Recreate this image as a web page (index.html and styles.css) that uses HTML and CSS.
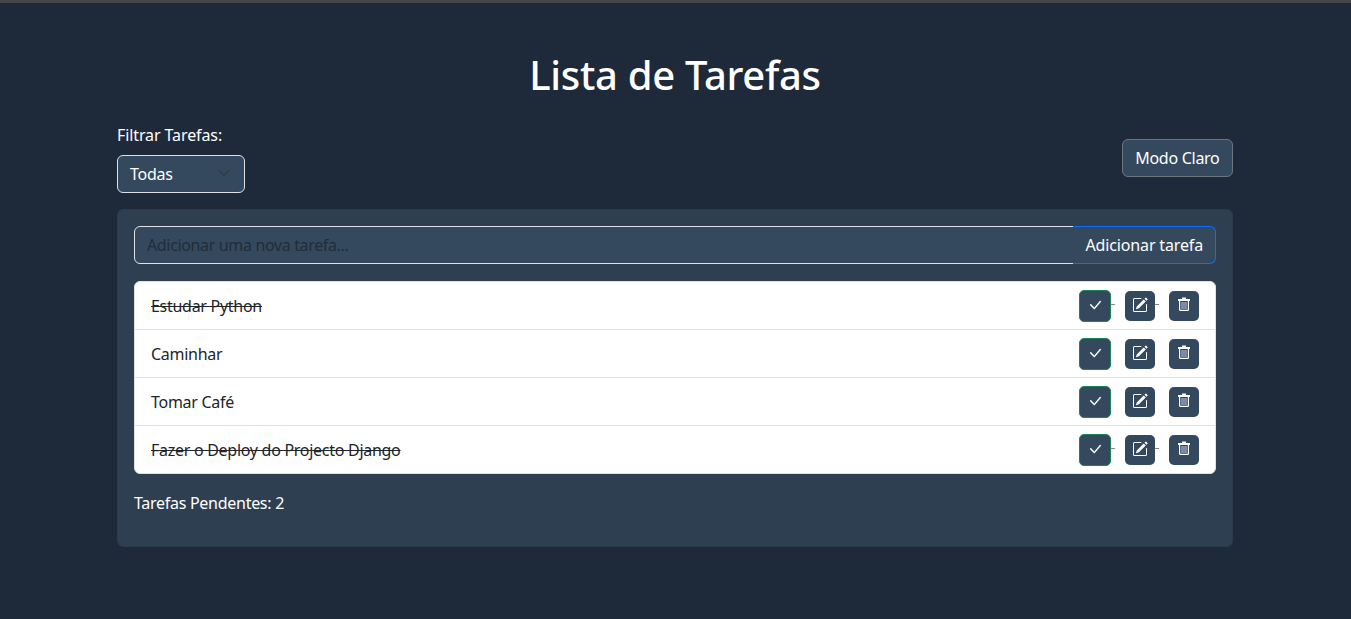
FILE: index.html
```html
<!DOCTYPE html>
<html lang="pt">
<head>
  <meta charset="UTF-8" />
  <meta name="viewport" content="width=device-width, initial-scale=1.0" />
  <title>Lista de Tarefas</title>
  <link rel="stylesheet" href="styles.css">
</head>
<body>
  <div class="top-line"></div>
  <div class="container">
    <h1 class="title">Lista de Tarefas</h1>
    <div class="toolbar">
      <div class="filter">
        <label for="filtro">Filtrar Tarefas:</label>
        <div class="select-box" id="filtro">
          <span>Todas</span>
          <svg class="chevron" viewBox="0 0 16 16"><path fill="none" stroke="#343a40" stroke-linecap="round" stroke-linejoin="round" stroke-width="2" d="m2 5 6 6 6-6"/></svg>
        </div>
      </div>
      <button class="btn-mode">Modo Claro</button>
    </div>
    <div class="card">
      <div class="add-row">
        <input type="text" class="add-input" placeholder="Adicionar uma nova tarefa..." />
        <button class="add-btn">Adicionar tarefa</button>
      </div>
      <ul class="tasks">
        <li class="task done">
          <span class="task-name">Estudar Python</span>
          <div class="actions">
            <a class="act act-check"><svg class="ico" viewBox="0 0 16 16"><use href="#i-check"/></svg></a>
            <a class="act"><svg class="ico" viewBox="0 0 16 16"><use href="#i-edit"/></svg></a>
            <a class="act"><svg class="ico-trash" viewBox="0 0 12 14"><use href="#i-trash"/></svg></a>
          </div>
        </li>
        <li class="task">
          <span class="task-name">Caminhar</span>
          <div class="actions">
            <a class="act act-check"><svg class="ico" viewBox="0 0 16 16"><use href="#i-check"/></svg></a>
            <a class="act"><svg class="ico" viewBox="0 0 16 16"><use href="#i-edit"/></svg></a>
            <a class="act"><svg class="ico-trash" viewBox="0 0 12 14"><use href="#i-trash"/></svg></a>
          </div>
        </li>
        <li class="task">
          <span class="task-name">Tomar Café</span>
          <div class="actions">
            <a class="act act-check"><svg class="ico" viewBox="0 0 16 16"><use href="#i-check"/></svg></a>
            <a class="act"><svg class="ico" viewBox="0 0 16 16"><use href="#i-edit"/></svg></a>
            <a class="act"><svg class="ico-trash" viewBox="0 0 12 14"><use href="#i-trash"/></svg></a>
          </div>
        </li>
        <li class="task done">
          <span class="task-name">Fazer o Deploy do Projecto Django</span>
          <div class="actions">
            <a class="act act-check"><svg class="ico" viewBox="0 0 16 16"><use href="#i-check"/></svg></a>
            <a class="act"><svg class="ico" viewBox="0 0 16 16"><use href="#i-edit"/></svg></a>
            <a class="act"><svg class="ico-trash" viewBox="0 0 12 14"><use href="#i-trash"/></svg></a>
          </div>
        </li>
      </ul>
      <p class="pending">Tarefas Pendentes: 2</p>
    </div>
  </div>

  <svg class="icon-defs" aria-hidden="true">
    <symbol id="i-check" viewBox="0 0 16 16">
      <path d="M12.736 3.97a.733.733 0 0 1 1.047 0c.286.289.29.756.01 1.05L7.88 12.01a.733.733 0 0 1-1.065.02L3.217 8.384a.757.757 0 0 1 0-1.06.733.733 0 0 1 1.047 0l3.052 3.093 5.42-6.447a.5.5 0 0 1 .02-.022Z"/>
    </symbol>
    <symbol id="i-edit" viewBox="0 0 16 16">
      <path d="M15.502 1.94a.5.5 0 0 1 0 .706L14.459 3.69l-2-2L13.502.646a.5.5 0 0 1 .707 0l1.293 1.293zm-1.75 2.456-2-2L4.939 9.21a.5.5 0 0 0-.121.196l-.805 2.414a.25.25 0 0 0 .316.316l2.414-.805a.5.5 0 0 0 .196-.12l6.813-6.814z"/>
      <path fill-rule="evenodd" d="M1 13.5A1.5 1.5 0 0 0 2.5 15h11a1.5 1.5 0 0 0 1.5-1.5v-6a.5.5 0 0 0-1 0v6a.5.5 0 0 1-.5.5h-11a.5.5 0 0 1-.5-.5v-11a.5.5 0 0 1 .5-.5H9a.5.5 0 0 0 0-1H2.5A1.5 1.5 0 0 0 1 2.5v11z"/>
    </symbol>
    <symbol id="i-trash" viewBox="0 0 12 14">
      <path d="M4 .5h4V2H4zM0 2h12v2H0z"/>
      <path d="M1 3.5v9A1.5 1.5 0 0 0 2.5 14h7a1.5 1.5 0 0 0 1.5-1.5v-9H9.8v9a.3.3 0 0 1-.3.3h-7a.3.3 0 0 1-.3-.3v-9z"/>
      <path fill="#c9c6ff" d="M3.5 5h1v7h-1zM5.5 5h1v7h-1zM7.5 5h1v7h-1z"/>
    </symbol>
  </svg>
</body>
</html>
```

FILE: styles.css
```css
* {
  box-sizing: border-box;
}
body {
  margin: 0;
  font-family: 'Noto Sans', sans-serif;
  font-size: 16px;
  line-height: 1.5;
  letter-spacing: -0.28px;
  background-color: #1e2a3a;
  color: #fff;
  height: 619px;
  overflow: hidden;
}
.top-line {
  height: 3px;
  background-color: #45454a;
}
.container {
  margin: 0 118px 0 117px;
}
.title {
  margin: 0;
  padding-top: 48px;
  font-size: 40px;
  font-weight: 500;
  line-height: 48px;
  text-align: center;
  letter-spacing: -0.3px;
}
.toolbar {
  display: flex;
  justify-content: space-between;
  align-items: center;
  margin-top: 24px;
}
.filter label {
  display: block;
  margin-bottom: 8px;
  letter-spacing: -0.1px;
}
.select-box {
  display: flex;
  justify-content: space-between;
  align-items: center;
  width: 128px;
  height: 38px;
  padding: 0 12px;
  background-color: #34495e;
  border: 1px solid #dee2e6;
  border-radius: 6px;
}
.chevron {
  width: 16px;
  height: 12px;
  margin-top: -2px;
}
.btn-mode {
  height: 38px;
  padding: 0 12.5px;
  font: inherit;
  letter-spacing: inherit;
  color: #fff;
  background-color: #34495e;
  border: 1px solid #6c757d;
  border-radius: 6px;
}
.card {
  margin-top: 16px;
  height: 338px;
  padding: 16px;
  background-color: #2e3f52;
  border: 1px solid #2a394b;
  border-radius: 6px;
}
.add-row {
  display: flex;
  height: 38px;
}
.add-input {
  flex: 1;
  min-width: 0;
  padding: 0 12px;
  font: inherit;
  letter-spacing: -0.35px;
  color: #fff;
  background-color: #34495e;
  border: 1px solid #dee2e6;
  border-radius: 6px 0 0 6px;
}
.add-input::placeholder {
  color: #212d3b;
  opacity: 1;
}
.add-btn {
  margin-left: -1px;
  padding: 0 12px;
  font: inherit;
  letter-spacing: -0.15px;
  color: #fff;
  background-color: #34495e;
  border: 1px solid #0d6efd;
  border-left-color: #34495e;
  border-radius: 0 6px 6px 0;
}
.tasks {
  list-style: none;
  margin: 17px 0 0;
  padding: 0;
  background-color: #fff;
  border: 1px solid #dee2e6;
  border-radius: 6px;
  overflow: hidden;
}
.task {
  display: flex;
  justify-content: space-between;
  align-items: center;
  height: 48px;
  padding: 0 16px;
  color: #212529;
  border-bottom: 1px solid #dee2e6;
}
.task:last-child {
  height: 47px;
  border-bottom: 0;
}
.done .task-name {
  text-decoration: line-through;
}
/* the spaces between the buttons get struck through too */
.done .actions {
  text-decoration: line-through;
  text-decoration-color: #7d848c;
  letter-spacing: 0;
}
.act {
  display: inline-flex;
  justify-content: center;
  align-items: center;
  width: 30px;
  height: 30px;
  margin-left: 10px;
  vertical-align: middle;
  background-color: #34495e;
  border-radius: 5px;
}
.ico {
  width: 16px;
  height: 16px;
  margin-bottom: 2px;
  fill: #fff;
}
.ico-trash {
  width: 12px;
  height: 14px;
  margin-bottom: 3px;
  fill: #fff;
}
.act-check {
  width: 32px;
  height: 32px;
  margin-left: 0;
  border: 1px solid #198754;
}
.pending {
  margin: 17px 0 0;
}
.icon-defs {
  display: none;
}
```
